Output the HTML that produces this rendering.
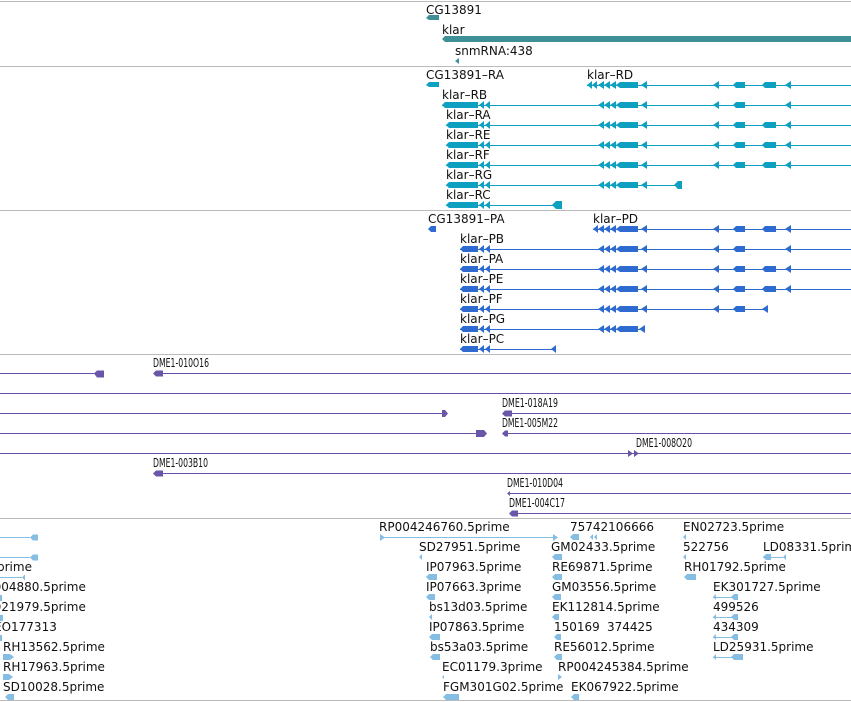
<!DOCTYPE html>
<html><head><meta charset="utf-8"><style>
html,body{margin:0;padding:0;background:#fff;width:851px;height:702px;overflow:hidden}
svg{display:block}
text{font-family:"DejaVu Sans","Liberation Sans",sans-serif;font-size:12px;fill:#111}
text.c{font-size:12px}
line{shape-rendering:crispEdges}
</style></head><body>
<svg width="851" height="702" viewBox="0 0 851 702" xmlns="http://www.w3.org/2000/svg">
<defs>
<path id="clA" d="M598 0l6-4v8zM604 0l6-4v8zM610 0l6-4v8zM616 0l4-3h18v6h-18zM641 0l6-4v8zM713 0l6-4v8zM733 0l3-3h9v6h-9zM762 0l3-3h11v6h-11zM785 0l6-4v8z"/>
<path id="clB" d="M598 0l6-4v8zM604 0l6-4v8zM610 0l6-4v8zM616 0l4-3h18v6h-18zM641 0l6-4v8zM713 0l6-4v8zM733 0l3-3h9v6h-9zM785 0l6-4v8z"/>
<path id="clG" d="M598 0l6-4v8zM604 0l6-4v8zM610 0l6-4v8zM616 0l4-3h18v6h-18zM641 0l6-4v8z"/>
<path id="h446" d="M446 0l3-3h29v6h-29zM479 0l5-4v8zM485 0l5-4v8z"/>
<path id="h442" d="M442 0l3-3h33v6h-33zM479 0l5-4v8zM485 0l5-4v8z"/>
<path id="h460" d="M460 0l3-3h15v6h-15zM479 0l5-4v8zM485 0l5-4v8z"/>
</defs>
<g stroke="#bbb" stroke-width="1">
<line x1="0" y1="1.5" x2="851" y2="1.5"/><line x1="0" y1="66.5" x2="851" y2="66.5"/><line x1="0" y1="210.5" x2="851" y2="210.5"/><line x1="0" y1="354.5" x2="851" y2="354.5"/><line x1="0" y1="518.5" x2="851" y2="518.5"/><line x1="0" y1="700.5" x2="851" y2="700.5"/>
</g>
<!-- track 1 -->
<g fill="#3f8f96">
<path d="M426 18l3-3h10v5h-10z"/>
<path d="M442 39l3-3h406v6h-406z"/>
<path d="M455 61l4-3v6z"/>
</g>
<text x="426" y="14">CG13891</text>
<text x="442" y="34">klar</text>
<text x="455" y="55">snmRNA:438</text>
<!-- track 2 -->
<g fill="#0ea0c0" stroke="none">
<path d="M426 85l3-3h10v5h-10z"/>
<g transform="translate(0,85)"><line x1="587" y1="0.5" x2="851" y2="0.5" stroke="#0ea0c0"/><path d="M587 0l5-4v8zM592 0l5-4v8z"/><use href="#clA"/></g>
<g transform="translate(0,105)"><line x1="442" y1="0.5" x2="851" y2="0.5" stroke="#0ea0c0"/><use href="#h442"/><use href="#clB"/></g>
<g transform="translate(0,125)"><line x1="446" y1="0.5" x2="851" y2="0.5" stroke="#0ea0c0"/><use href="#h446"/><use href="#clA"/></g>
<g transform="translate(0,145)"><line x1="446" y1="0.5" x2="851" y2="0.5" stroke="#0ea0c0"/><use href="#h446"/><use href="#clA"/></g>
<g transform="translate(0,165)"><line x1="446" y1="0.5" x2="851" y2="0.5" stroke="#0ea0c0"/><use href="#h446"/><use href="#clA"/></g>
<g transform="translate(0,185)"><line x1="446" y1="0.5" x2="680" y2="0.5" stroke="#0ea0c0"/><use href="#h446"/><use href="#clG"/><path d="M674 0l4-4h4v8h-4z"/></g>
<g transform="translate(0,205)"><line x1="446" y1="0.5" x2="560" y2="0.5" stroke="#0ea0c0"/><use href="#h446"/><path d="M552 0l4-4h6v8h-6z"/></g>
</g>
<text x="426" y="79">CG13891–RA</text>
<text x="587" y="79">klar–RD</text>
<text x="442" y="99">klar–RB</text>
<text x="446" y="119">klar–RA</text>
<text x="446" y="139">klar–RE</text>
<text x="446" y="159">klar–RF</text>
<text x="446" y="179">klar–RG</text>
<text x="446" y="199">klar–RC</text>
<!-- track 3 -->
<g fill="#2e6bd0">
<path d="M428 229l3-3h5v6h-5z"/>
<g transform="translate(0,229)"><line x1="593" y1="0.5" x2="851" y2="0.5" stroke="#2e6bd0"/><path d="M593 0l5-4v8z"/><use href="#clA"/></g>
<g transform="translate(0,249)"><line x1="460" y1="0.5" x2="851" y2="0.5" stroke="#2e6bd0"/><use href="#h460"/><use href="#clB"/></g>
<g transform="translate(0,269)"><line x1="460" y1="0.5" x2="851" y2="0.5" stroke="#2e6bd0"/><use href="#h460"/><use href="#clA"/></g>
<g transform="translate(0,289)"><line x1="460" y1="0.5" x2="851" y2="0.5" stroke="#2e6bd0"/><use href="#h460"/><use href="#clA"/></g>
<g transform="translate(0,309)"><line x1="460" y1="0.5" x2="767" y2="0.5" stroke="#2e6bd0"/><use href="#h460"/><use href="#clG"/><path d="M713 0l6-4v8zM733 0l3-3h9v6h-9zM762 0l6-4v8z"/></g>
<g transform="translate(0,329)"><line x1="460" y1="0.5" x2="640" y2="0.5" stroke="#2e6bd0"/><use href="#h460"/><path d="M598 0l6-4v8zM604 0l6-4v8zM610 0l6-4v8zM616 0l4-3h18v6h-18zM639 0l6-4v8z"/></g>
<g transform="translate(0,349)"><line x1="460" y1="0.5" x2="555" y2="0.5" stroke="#2e6bd0"/><use href="#h460"/><path d="M551 0l5-4v8z"/></g>
</g>
<text x="428" y="223">CG13891–PA</text>
<text x="593" y="223">klar–PD</text>
<text x="460" y="243">klar–PB</text>
<text x="460" y="263">klar–PA</text>
<text x="460" y="283">klar–PE</text>
<text x="460" y="303">klar–PF</text>
<text x="460" y="323">klar–PG</text>
<text x="460" y="343">klar–PC</text>
<!-- track 4 -->
<g stroke="#6650a8" stroke-width="1">
<line x1="0" y1="373.5" x2="100" y2="373.5"/><line x1="155" y1="373.5" x2="851" y2="373.5"/>
<line x1="0" y1="393.5" x2="851" y2="393.5"/>
<line x1="0" y1="413.5" x2="446" y2="413.5"/><line x1="504" y1="413.5" x2="851" y2="413.5"/>
<line x1="0" y1="433.5" x2="484" y2="433.5"/><line x1="504" y1="433.5" x2="851" y2="433.5"/>
<line x1="0" y1="453.5" x2="851" y2="453.5"/>
<line x1="155" y1="473.5" x2="851" y2="473.5"/>
<line x1="508" y1="493.5" x2="851" y2="493.5"/>
<line x1="510" y1="513.5" x2="851" y2="513.5"/>
</g>
<g fill="#6a56a8">
<path d="M94 373.5l3-3h7v7h-7z"/>
<path d="M153 373.5l3-3h7v6h-7z"/>
<path d="M442 410h3l3 3.5-3 3.5h-3z"/>
<path d="M502 413.5l3-3h7v6h-7z"/>
<path d="M476 430h8l3 3.5-3 3.5h-8z"/>
<path d="M502 433.5l3-3h3v6h-3z"/>
<path d="M628 450l5 3.5-5 3.5zM634 450l5 3.5-5 3.5z"/>
<path d="M153 473.5l3-3h7v6h-7z"/>
<path d="M507 493.5l3-2.5v5z"/>
<path d="M509 513.5l3-3h6v6h-6z"/>
</g>
<text class="c" x="153" y="367" textLength="56" lengthAdjust="spacingAndGlyphs">DME1-010O16</text>
<text class="c" x="502" y="407" textLength="56" lengthAdjust="spacingAndGlyphs">DME1-018A19</text>
<text class="c" x="502" y="427" textLength="56" lengthAdjust="spacingAndGlyphs">DME1-005M22</text>
<text class="c" x="636" y="447" textLength="56" lengthAdjust="spacingAndGlyphs">DME1-008O20</text>
<text class="c" x="153" y="467" textLength="55" lengthAdjust="spacingAndGlyphs">DME1-003B10</text>
<text class="c" x="507" y="487" textLength="56" lengthAdjust="spacingAndGlyphs">DME1-010D04</text>
<text class="c" x="509" y="507" textLength="56" lengthAdjust="spacingAndGlyphs">DME1-004C17</text>
<!-- track 5 -->
<g stroke="#85bde3" stroke-width="1">
<line x1="0" y1="537.5" x2="30" y2="537.5"/><line x1="0" y1="557.5" x2="30" y2="557.5"/><line x1="0" y1="577.5" x2="22" y2="577.5"/>
<line x1="380" y1="537.5" x2="555" y2="537.5"/>
<line x1="763" y1="557.5" x2="783" y2="557.5"/>
<line x1="713" y1="597.5" x2="737" y2="597.5"/><line x1="713" y1="617.5" x2="737" y2="617.5"/><line x1="713" y1="637.5" x2="737" y2="637.5"/><line x1="713" y1="657.5" x2="737" y2="657.5"/>
</g>
<g fill="#85bde3">
<path d="M30 537.5l3-3h5v6h-5zM30 557.5l3-3h5v6h-5zM22 577.5l3-3v6z"/>
<path d="M0 595h2v6h-2zM0 615h3v6h-3zM0 635h2v6h-2z"/>
<path d="M3 654h7l4 3-4 3h-7zM3 674h6l4 3-4 3h-6zM5 697l3-3h6v6h-6z"/>
<path d="M380 534l5 3.5-5 3.5zM553 534l5 3.5-5 3.5z"/>
<path d="M419 557l3-3v6zM426 577l3-3h8v6h-8zM426 597l3-3h6v6h-6zM429 617l3-3v6zM429 637l3-3h8v6h-8zM430 657l3-3h7v6h-7zM442 677l2-2v4zM443 697l3-3h13v6h-13z"/>
<path d="M570 537l3-3h6v6h-6zM590 537l3-3v6zM594 537l3-3v6z"/>
<path d="M552 557l3-3h7v6h-7zM552 577l3-3h7v6h-7zM552 597l3-3h6v6h-6zM552 617l3-3h4v6h-4zM554 637l3-3h4v6h-4zM554 657l3-3h5v6h-5zM558 674l4 3-4 3zM571 697l3-3h5v6h-5z"/>
<path d="M683 537l3-3v6zM683 557l3-3v6zM684 577l3-3h9v6h-9z"/>
<path d="M763 557l3-3h5v6h-5zM783 557l3-3v6z"/>
<path d="M713 597l3-3v6zM731 597l3-3h4v6h-4zM713 617l3-3v6zM731 617l3-3h4v6h-4zM713 637l3-3v6zM731 637l3-3h4v6h-4zM713 657l3-3v6zM731 657l3-3h9v6h-9z"/>
</g>
<text x="-3" y="571">prime</text>
<text x="-8" y="591">D04880.5prime</text>
<text x="-8" y="611">D21979.5prime</text>
<text x="-6" y="631">EO177313</text>
<text x="3" y="651">RH13562.5prime</text>
<text x="3" y="671">RH17963.5prime</text>
<text x="3" y="691">SD10028.5prime</text>
<text x="379" y="531">RP004246760.5prime</text>
<text x="570" y="531">75742106666</text>
<text x="683" y="531">EN02723.5prime</text>
<text x="419" y="551">SD27951.5prime</text>
<text x="551" y="551">GM02433.5prime</text>
<text x="683" y="551">522756</text>
<text x="763" y="551">LD08331.5prime</text>
<text x="426" y="571">IP07963.5prime</text>
<text x="552" y="571">RE69871.5prime</text>
<text x="684" y="571">RH01792.5prime</text>
<text x="426" y="591">IP07663.3prime</text>
<text x="552" y="591">GM03556.5prime</text>
<text x="713" y="591">EK301727.5prime</text>
<text x="429" y="611">bs13d03.5prime</text>
<text x="552" y="611">EK112814.5prime</text>
<text x="713" y="611">499526</text>
<text x="429" y="631">IP07863.5prime</text>
<text x="554" y="631">150169</text>
<text x="607" y="631">374425</text>
<text x="713" y="631">434309</text>
<text x="430" y="651">bs53a03.5prime</text>
<text x="554" y="651">RE56012.5prime</text>
<text x="713" y="651">LD25931.5prime</text>
<text x="442" y="671">EC01179.3prime</text>
<text x="558" y="671">RP004245384.5prime</text>
<text x="443" y="691">FGM301G02.5prime</text>
<text x="571" y="691">EK067922.5prime</text>
</svg>
</body></html>
